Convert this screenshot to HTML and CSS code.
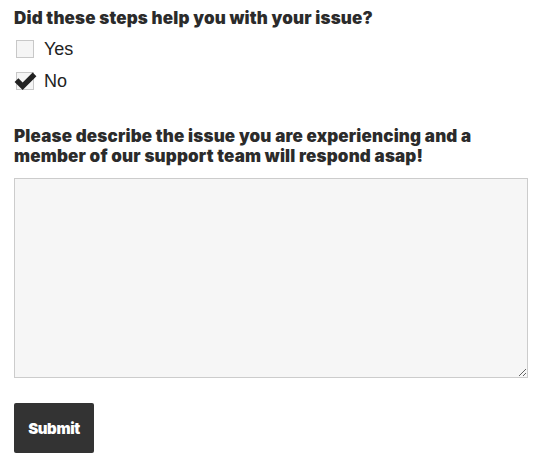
FILE: index.html
```html
<!DOCTYPE html>
<html>
<head>
<meta charset="utf-8">
<link rel="stylesheet" href="styles.css">
</head>
<body>
<form class="form">
  <h3 class="q">Did these steps help you with your issue?</h3>
  <div class="options">
    <label class="opt"><span class="box"></span><span class="opt-text">Yes</span></label>
    <label class="opt"><span class="box checked"><svg class="tick" viewBox="0 0 24 20" width="23" height="19"><path d="M0.5 10.5 L4.5 6.5 L9 11 L19.5 0.5 L23.5 4.5 L9 19 Z" fill="#222"/></svg></span><span class="opt-text">No</span></label>
  </div>
  <h3 class="q q2">Please describe the issue you are experiencing and a member of our support team will respond asap!</h3>
  <textarea class="ta"></textarea>
  <button type="button" class="submit">Submit</button>
</form>
</body>
</html>
```
FILE: styles.css
```css
html, body { margin: 0; padding: 0; background: #fff; }
.form { padding: 8px 14px 0 14px; display: flex; flex-direction: column; align-items: flex-start; }
.q { margin: 0; font-family: Inter, "Liberation Sans", sans-serif; font-weight: 900; font-size: 17px; line-height: 20px; color: #2b2b2b; letter-spacing: 0.17px; }
.options { display: flex; flex-direction: column; gap: 14px; margin-top: 12px; }
.opt { display: flex; align-items: center; gap: 10px; font-family: "Liberation Sans", Arial, sans-serif; font-size: 18px; color: #222; height: 18px; }
.box { position: relative; width: 16px; height: 16px; border: 1px solid #c8c8c8; background: #f5f5f5; margin-left: 2px; }
.tick { position: absolute; left: -3px; top: -1px; }
.q2 { margin-top: 36px; width: 490px; }
.ta { margin-top: 12px; width: 514px; height: 200px; box-sizing: border-box; border: 1px solid #ccc; background: #f6f6f6; resize: vertical; }
.submit { margin-top: 25px; width: 80px; height: 50px; border: none; border-radius: 2px; background: #333; color: #fff; font-family: Inter, "Liberation Sans", sans-serif; font-weight: 900; font-size: 15px; letter-spacing: -0.4px; }
```
